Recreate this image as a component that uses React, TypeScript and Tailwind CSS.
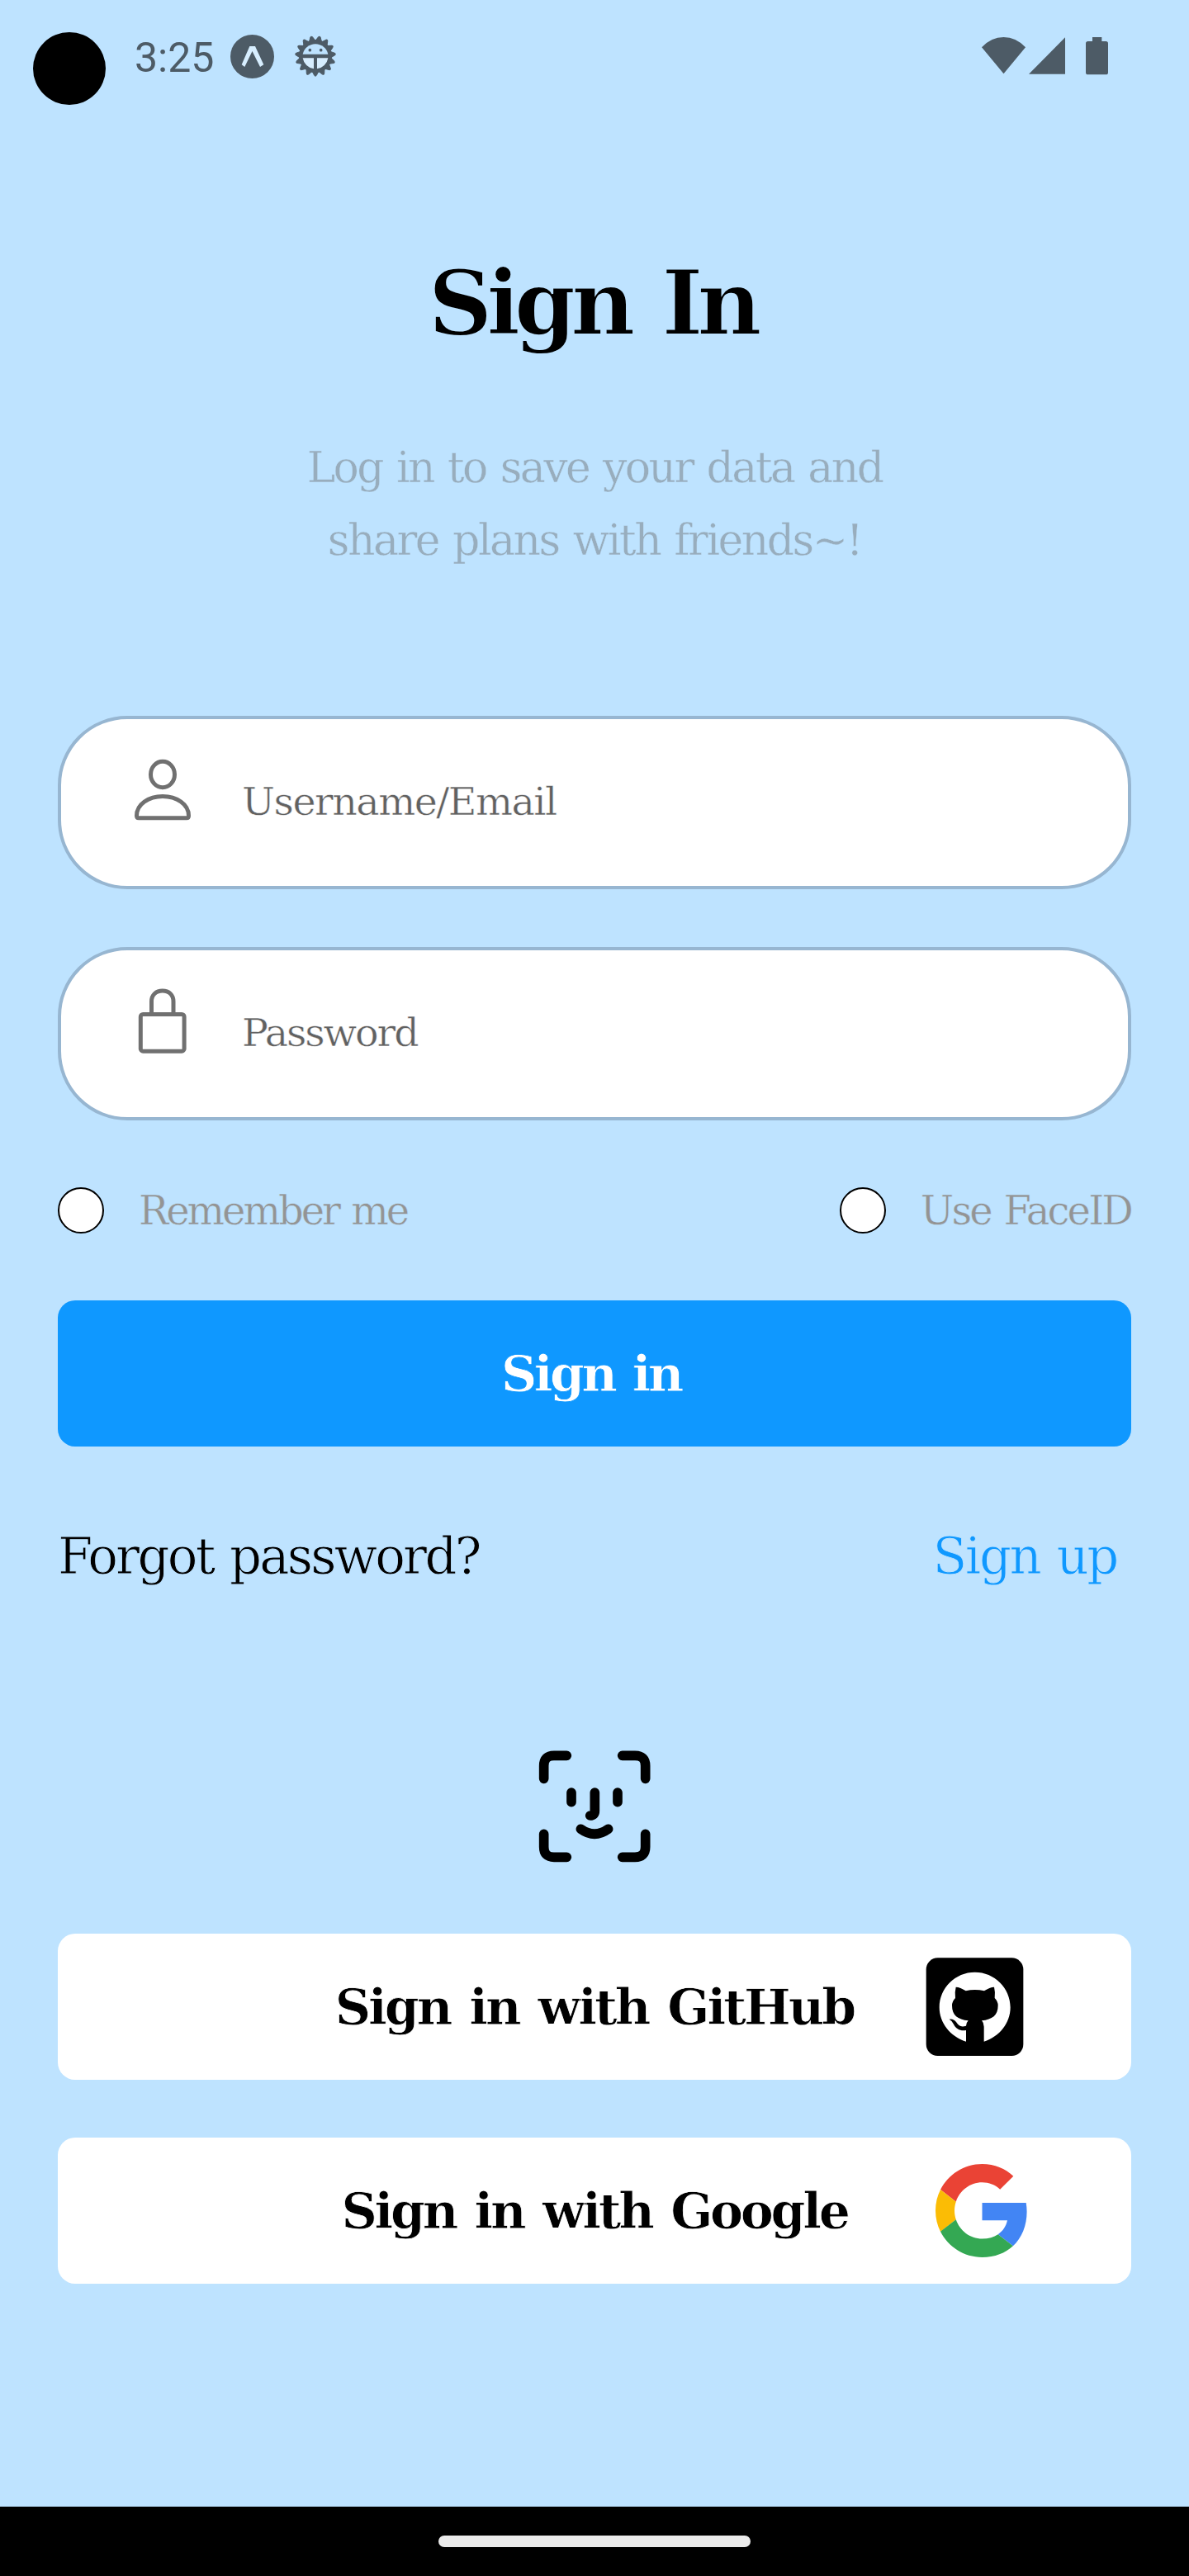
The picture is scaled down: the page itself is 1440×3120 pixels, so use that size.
import type { ReactNode } from "react";

const TEETH = Array.from({ length: 15 }, (_, i) => i * 24);

function ExpoIcon() {
  return (
    <svg className="mt-[42px] ml-5 h-[53px] w-[53px]" viewBox="0 0 159 159">
      <circle cx="79.5" cy="79.5" r="79.5" fill="#4d5b66" />
      <path d="M70 42H90L121 109L108 117L79.5 60L52 117L41 109Z" fill="#d7eeff" />
    </svg>
  );
}

function DebugIcon() {
  return (
    <svg className="mt-[42px] ml-6 h-[52px] w-[52px]" viewBox="-78 -78 156 156">
      {TEETH.map((angle) => (
        <path
          key={angle}
          d="M-11 -56L-4 -70Q0 -76 4 -70L11 -56Z"
          transform={`rotate(${angle + 12})`}
          fill="#4d5b66"
          stroke="#4d5b66"
          strokeWidth="3"
          strokeLinejoin="round"
        />
      ))}
      <circle r="60" fill="#4d5b66" />
      <path d="M-46 -7A47 47 0 0 1 46 -7Z" fill="#bee3ff" />
      <path d="M-46 7H-6V46A47 47 0 0 1 -46 7ZM46 7H6V46A47 47 0 0 0 46 7Z" fill="#d7eeff" />
      <circle cx="-20" cy="-22" r="5.5" fill="#4d5b66" />
      <circle cx="20" cy="-22" r="5.5" fill="#4d5b66" />
    </svg>
  );
}

function StatusBar() {
  return (
    <div className="flex h-[136px] items-start justify-between pr-[98px] pl-10">
      <div className="flex items-start">
        <div className="mt-[39px] h-[88px] w-[88px] rounded-full bg-black" />
        <span className="mt-[42px] ml-[35px] w-24 font-['Roboto'] text-[50px] leading-[56px] text-[#4d5b66]">3:25</span>
        <ExpoIcon />
        <DebugIcon />
      </div>
      <div className="mt-[45px] flex items-start">
        <svg className="h-[45px] w-[53px]" viewBox="0 0 159 135">
          <path d="M0 37Q34 0 79.5 0T159 37L79.5 133Z" fill="#4d5b66" />
        </svg>
        <svg className="ml-1 h-[45px] w-[45px]" viewBox="0 0 135 135">
          <path d="M0 134L132 1V134Z" fill="#4d5b66" />
        </svg>
        <svg className="ml-6 h-[46px] w-[27px]" viewBox="0 0 81 138">
          <path d="M24 0H58V15H73Q81 15 81 23V128Q81 136 73 136H8Q0 136 0 128V23Q0 15 8 15H24Z" fill="#4d5b66" />
        </svg>
      </div>
    </div>
  );
}

function Field({ icon, children }: { icon: ReactNode; children: ReactNode }) {
  return (
    <div className="flex h-[210px] items-center rounded-[84px] border-4 border-[#97b6d1] bg-white pl-[81px]">
      {icon}
      <div className="mb-0.5 ml-[54px] text-[47.5px] leading-none text-[#616161] [-webkit-text-stroke:0.5px_#fff]">{children}</div>
    </div>
  );
}

function UserIcon() {
  return (
    <svg className="-mt-8 h-[84px] w-[84px]" viewBox="155 914 84 84" fill="none" stroke="#707070" strokeWidth="5" strokeLinejoin="round">
      <ellipse cx="197" cy="938" rx="14.5" ry="15.8" />
      <path d="M165.5 988C165.5 974 180 964.5 197 964.5S228.5 974 228.5 988Q228.5 990.8 226 990.8H168Q165.5 990.8 165.5 988Z" />
    </svg>
  );
}

function LockIcon() {
  return (
    <svg className="-mt-8 h-[84px] w-[84px]" viewBox="155 1194 84 84" fill="none" stroke="#707070" strokeWidth="5">
      <path d="M183.5 1228V1213C183.5 1205 189 1200 196.8 1200S210 1205 210 1213V1228" />
      <rect x="170.3" y="1228.5" width="52.8" height="44.7" rx="3" />
    </svg>
  );
}

function FaceIcon() {
  return (
    <svg className="mx-auto mt-[155px] h-[200px] w-[200px]" viewBox="0 0 600 600" fill="none" stroke="#000" strokeWidth="35" strokeLinecap="round" strokeLinejoin="round">
      <path d="M116 223V176Q116 139 153 139H199M401 139H447Q485 139 485 176V223M485 424V471Q485 508 447 508H401M199 508H153Q116 508 116 471V424" />
      <path d="M216 273V308M384 273V308M301 273V340Q301 357 284 357M250 406Q300 442 350 406" />
    </svg>
  );
}

function GithubIcon() {
  return (
    <svg className="h-[119px] w-[119px]" viewBox="178 151 357 357">
      <rect x="180" y="152" width="353" height="356" rx="42" fill="#000" />
      <path
        d="M325 456C268 439 228 388 228 332C228 261 286 204 357 204S486 261 486 332C486 388 447 439 390 456V402Q390 388 382 380C420 376 441 361 441 325Q441 310 429 298Q432 278 427 258Q411 258 391 272Q357 264 324 272Q304 258 288 258Q283 278 286 298Q274 310 274 325C274 361 295 376 333 380Q326 387 325 399C306 405 298 398 289 385Q279 372 264 375Q275 381 280 393C288 410 305 419 325 415Z"
        fill="#fff"
      />
    </svg>
  );
}

function GoogleIcon() {
  return (
    <svg className="h-[113px] w-[113px]" viewBox="0 0 48 48">
      <path fill="#ea4335" d="M24 9.5c3.54 0 6.71 1.22 9.21 3.6l6.85-6.85C35.9 2.38 30.47 0 24 0 14.62 0 6.51 5.38 2.56 13.22l7.98 6.19C12.43 13.72 17.74 9.5 24 9.5z" />
      <path fill="#4285f4" d="M46.98 24.55c0-1.57-.15-3.09-.38-4.55H24v9.02h12.94c-.58 2.96-2.26 5.48-4.78 7.18l7.73 6c4.51-4.18 7.09-10.36 7.09-17.65z" />
      <path fill="#fbbc05" d="M10.53 28.59c-.48-1.45-.76-2.99-.76-4.59s.27-3.14.76-4.59l-7.98-6.19C.92 16.46 0 20.12 0 24c0 3.88.92 7.54 2.56 10.78l7.97-6.19z" />
      <path fill="#34a853" d="M24 48c6.48 0 11.93-2.13 15.89-5.81l-7.73-6c-2.15 1.45-4.92 2.3-8.16 2.3-6.26 0-11.57-4.22-13.47-9.91l-7.98 6.19C6.51 42.62 14.62 48 24 48z" />
    </svg>
  );
}

function Option({ children }: { children: ReactNode }) {
  return (
    <div className="flex items-center">
      <div className="h-14 w-14 rounded-full border-2 border-black bg-white" />
      <div className="ml-[42px] text-[48px] leading-none text-[#949494] [-webkit-text-stroke:0.4px_#bee3ff]">{children}</div>
    </div>
  );
}

function SocialButton({ label, icon }: { label: ReactNode; icon: ReactNode }) {
  return (
    <button className="relative flex h-[177px] w-full items-center justify-center rounded-[21px] bg-white text-[60px] leading-none font-bold text-black [-webkit-text-stroke:0.8px_#fff]">
      {label}
      {icon}
    </button>
  );
}

export default function App() {
  return (
    <div className="flex h-[3120px] w-[1440px] flex-col bg-[#bee3ff] font-['DejaVu_Serif',serif]">
      <StatusBar />
      <main className="flex flex-1 flex-col px-[70px]">
        <h1 className="mt-[176px] pr-1.5 text-center text-[108px] leading-[110px] font-bold tracking-[-7.4px] text-black [word-spacing:9px] [-webkit-text-stroke:2px_#bee3ff]">Sign In</h1>
        <p className="mt-[100px] text-center text-[52px] leading-[88px] text-[#98adbd] [word-spacing:3px] [-webkit-text-stroke:0.4px_#bee3ff]">
          <span className="tracking-[-2.6px]">Log in to save your data and</span>
          <br />
          <span className="tracking-[-2.5px]">share plans with friends~!</span>
        </p>
        <div className="mt-[169px] flex flex-col gap-[70px]">
          <Field icon={<UserIcon />}>
            <span className="tracking-[-1.5px]">Username/Email</span>
          </Field>
          <Field icon={<LockIcon />}>
            <span className="tracking-[-2.1px]">Password</span>
          </Field>
        </div>
        <div className="mt-[81px] flex h-14 items-center justify-between">
          <Option>
            <span className="tracking-[-3px] [word-spacing:3px]">Remember me</span>
          </Option>
          <Option>
            <span className="tracking-[-2.8px] [word-spacing:3px]">Use FaceID</span>
          </Option>
        </div>
        <button className="mt-[81px] h-[177px] rounded-[21px] bg-[#0f98ff] pr-2 text-[60px] leading-none font-bold tracking-[-3.6px] text-white [word-spacing:4px] [-webkit-text-stroke:0.8px_#0f98ff]">Sign in</button>
        <div className="mt-[92px] mb-px flex h-20 items-center justify-between pr-[17px] text-[61px] leading-none [word-spacing:3px] [-webkit-text-stroke:0.9px_#bee3ff]">
          <span className="tracking-[-2.8px] text-black">Forgot password?</span>
          <span className="tracking-[-2.4px] text-[#0f98ff]">Sign up</span>
        </div>
        <FaceIcon />
        <div className="mt-[62px] flex flex-col gap-[70px]">
          <SocialButton
            label={<span className="tracking-[-3px] [word-spacing:5px]">Sign in with GitHub</span>}
            icon={<span className="absolute top-[29px] right-[130px]"><GithubIcon /></span>}
          />
          <SocialButton
            label={<span className="tracking-[-3.3px] [word-spacing:5px]">Sign in with Google</span>}
            icon={<span className="absolute top-[32px] right-[124px]"><GoogleIcon /></span>}
          />
        </div>
      </main>
      <div className="flex h-[84px] items-center justify-center bg-black">
        <div className="h-3.5 w-[378px] rounded-full bg-[#ebebeb]" />
      </div>
    </div>
  );
}
